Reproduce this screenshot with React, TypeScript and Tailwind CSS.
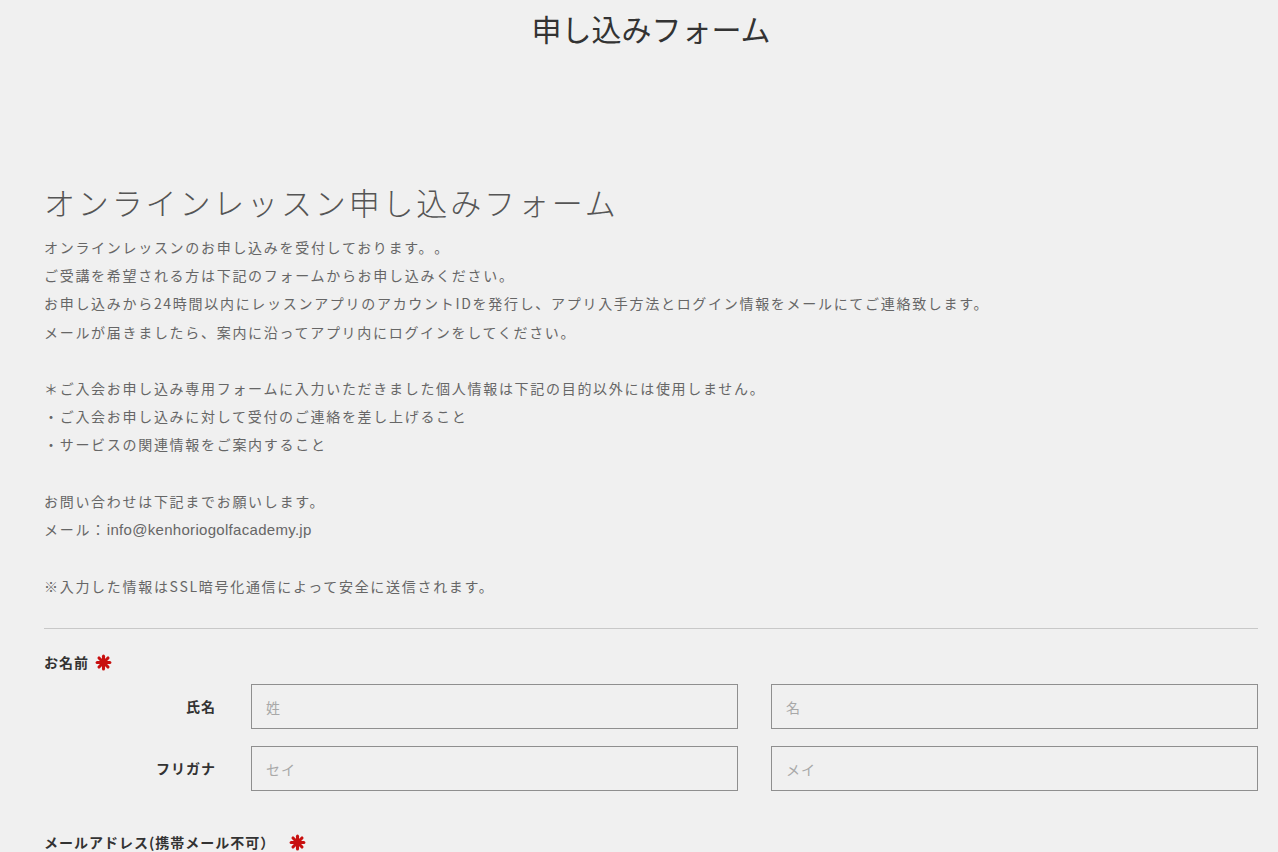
const jp = "font-['Noto_Sans_CJK_JP',sans-serif] [text-spacing-trim:space-all]";

function Req() {
  return (
    <svg width="17" height="17" viewBox="0 0 20 20" className="inline-block">
      <g stroke="#c8100f" strokeWidth="3.6" strokeLinecap="round">
        <line x1="10" y1="2.5" x2="10" y2="17.5" />
        <line x1="2.5" y1="10" x2="17.5" y2="10" />
        <line x1="4.7" y1="4.7" x2="15.3" y2="15.3" />
        <line x1="15.3" y1="4.7" x2="4.7" y2="15.3" />
      </g>
      <circle cx="10" cy="10" r="2.4" fill="#c8100f" />
    </svg>
  );
}

function Field({ placeholder }: { placeholder: string }) {
  return (
    <input
      placeholder={placeholder}
      className="h-[45px] min-w-0 flex-1 border border-[#8f8f8f] bg-transparent px-[14px] text-[14px] tracking-[1px] text-[#333] outline-none placeholder:text-[#a8a8a8]"
    />
  );
}

function NameRow({ label, a, b }: { label: string; a: string; b: string }) {
  return (
    <div className="flex items-center">
      <div className="w-[172px] shrink-0 text-right text-[14px] font-bold tracking-[1px] text-[#333]">
        {label}
      </div>
      <div className="ml-[35px] flex flex-1 gap-[33px]">
        <Field placeholder={a} />
        <Field placeholder={b} />
      </div>
    </div>
  );
}

const body = [
  "オンラインレッスンのお申し込みを受付しております。。",
  "ご受講を希望される方は下記のフォームからお申し込みください。",
  "お申し込みから24時間以内にレッスンアプリのアカウントIDを発行し、アプリ入手方法とログイン情報をメールにてご連絡致します。",
  "メールが届きましたら、案内に沿ってアプリ内にログインをしてください。",
  "",
  "＊ご入会お申し込み専用フォームに入力いただきました個人情報は下記の目的以外には使用しません。",
  "・ご入会お申し込みに対して受付のご連絡を差し上げること",
  "・サービスの関連情報をご案内すること",
  "",
  "お問い合わせは下記までお願いします。",
  "MAIL",
  "",
  "※入力した情報はSSL暗号化通信によって安全に送信されます。",
];

export default function App() {
  return (
    <div className={`min-h-[852px] bg-[#f0f0f0] pl-[44px] pr-[20px] ${jp}`}>
      <h1 className="pt-[6px] text-center text-[30px] leading-[45px] text-[#333]">
        申し込みフォーム
      </h1>

      <h2 className="mt-[127px] text-[31px] font-light leading-[48px] tracking-[2.85px] text-[#555]">
        オンラインレッスン申し込みフォーム
      </h2>

      <div className="mt-[7px] text-[14px] leading-[28.2px] tracking-[1.7px] text-[#666]">
        {body.map((line, i) =>
          line === "MAIL" ? (
            <div key={i}>
              メール：
              <span className="font-['Liberation_Sans',sans-serif] text-[15px] tracking-[0.3px]">
                info@kenhoriogolfacademy.jp
              </span>
            </div>
          ) : (
            <div key={i} className="h-[28.2px]">
              {line}
            </div>
          ),
        )}
      </div>

      <hr className="mt-[28px] border-0 border-t border-[#c8c8c8]" />

      <div className="mt-[21px] flex items-center gap-[6px] text-[14px] font-bold leading-[24px] tracking-[1px] text-[#333]">
        お名前 <Req />
      </div>

      <div className="mt-[10px] flex flex-col gap-[17px]">
        <NameRow label="氏名" a="姓" b="名" />
        <NameRow label="フリガナ" a="セイ" b="メイ" />
      </div>

      <div className="mt-[39px] flex items-center gap-[14px] text-[14px] font-bold leading-[24px] tracking-[1px] text-[#333]">
        メールアドレス(携帯メール不可） <Req />
      </div>
    </div>
  );
}
